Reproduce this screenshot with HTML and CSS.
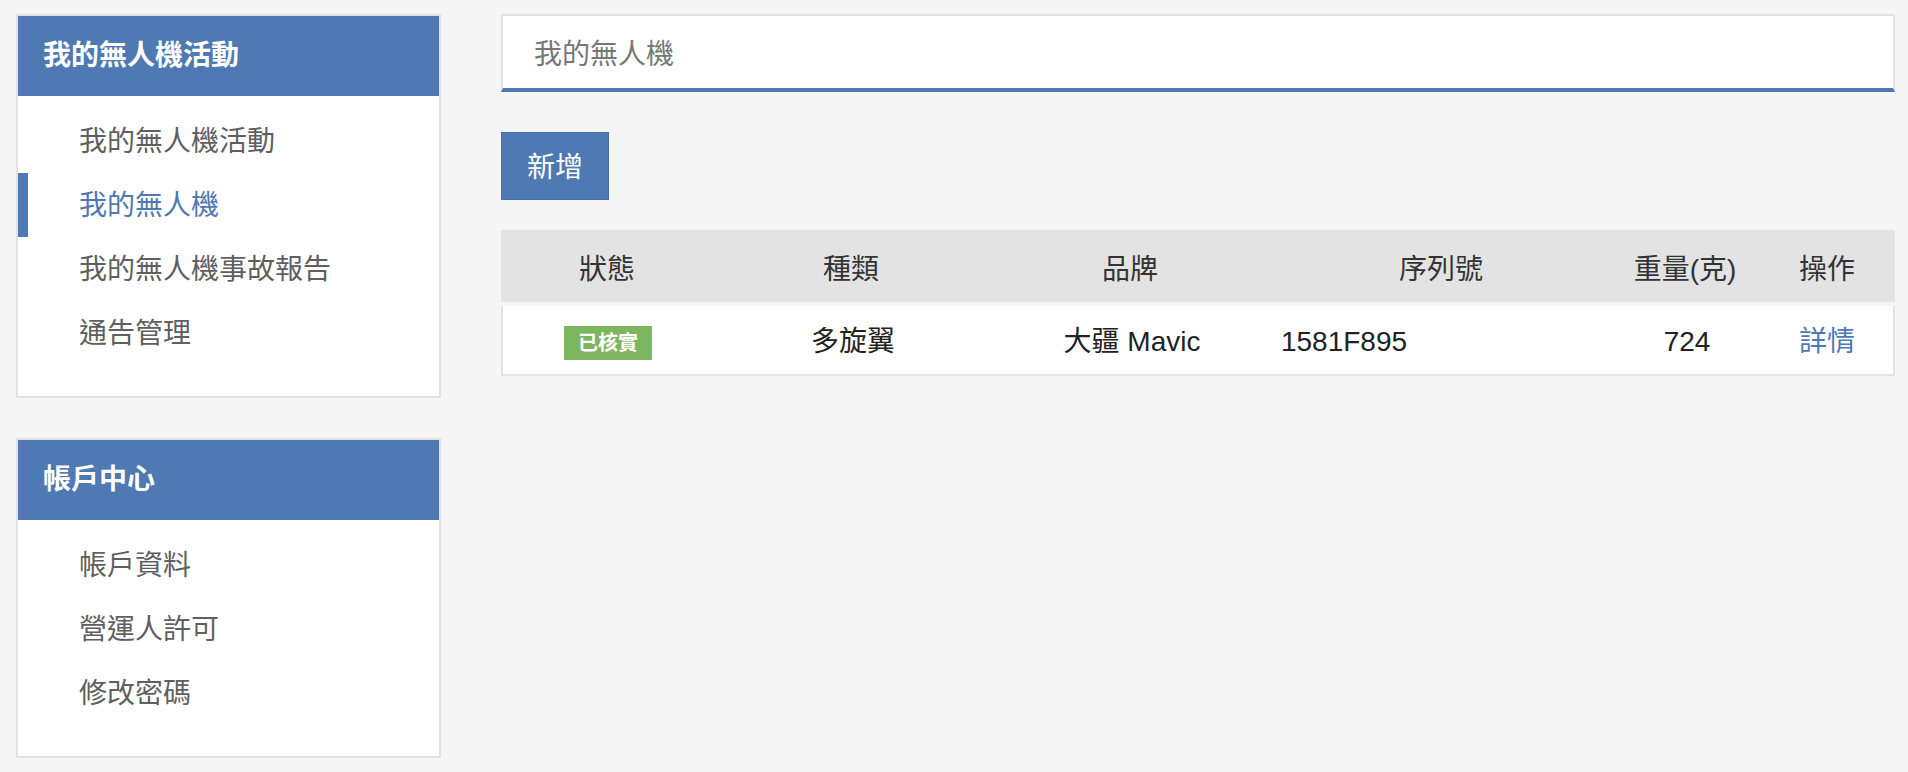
FILE: index.html
```html
<!DOCTYPE html>
<html lang="zh-Hant">
<head>
<meta charset="utf-8">
<title>我的無人機</title>
<link rel="stylesheet" href="styles.css">
</head>
<body>
<div class="page">
  <aside class="sidebar">
    <section class="panel">
      <div class="panel-head">我的無人機活動</div>
      <ul class="panel-menu">
        <li class="menu-item">我的無人機活動</li>
        <li class="menu-item active">我的無人機</li>
        <li class="menu-item">我的無人機事故報告</li>
        <li class="menu-item">通告管理</li>
      </ul>
    </section>
    <section class="panel">
      <div class="panel-head">帳戶中心</div>
      <ul class="panel-menu">
        <li class="menu-item">帳戶資料</li>
        <li class="menu-item">營運人許可</li>
        <li class="menu-item">修改密碼</li>
      </ul>
    </section>
  </aside>
  <main class="content">
    <div class="title-box">我的無人機</div>
    <button class="btn-add" type="button">新增</button>
    <div class="table">
      <div class="thead">
        <div class="cell">狀態</div>
        <div class="cell">種類</div>
        <div class="cell">品牌</div>
        <div class="cell">序列號</div>
        <div class="cell">重量(克)</div>
        <div class="cell">操作</div>
      </div>
      <div class="trow">
        <div class="cell"><span class="badge">已核實</span></div>
        <div class="cell">多旋翼</div>
        <div class="cell">大疆 Mavic</div>
        <div class="cell">1581F895<span class="redacted"></span></div>
        <div class="cell">724</div>
        <div class="cell"><a class="link" href="#">詳情</a></div>
      </div>
    </div>
  </main>
</div>
</body>
</html>
```

FILE: styles.css
```css
* {
  box-sizing: border-box;
}

html, body {
  margin: 0;
  padding: 0;
  background: #f5f5f5;
}

body {
  font-family: "Liberation Sans", "Noto Sans CJK TC", sans-serif;
  color: #333;
}

.page {
  display: flex;
  gap: 60px;
  padding: 14px 13px 0 16px;
}

.sidebar {
  flex: none;
  width: 425px;
  display: flex;
  flex-direction: column;
  gap: 40px;
}

.panel {
  background: #fff;
  border: 2px solid #e2e2e2;
}

.panel-head {
  height: 80px;
  line-height: 80px;
  padding-left: 25px;
  background: #4e79b3;
  color: #fff;
  font-size: 28px;
  font-weight: bold;
}

.panel-menu {
  list-style: none;
  margin: 0;
  padding: 13px 0 31px;
}

.menu-item {
  height: 64px;
  line-height: 64px;
  padding-top: 1px;
  padding-left: 61px;
  font-size: 28px;
  color: #5f5f5f;
}

.menu-item.active {
  border-left: 10px solid #4e79b3;
  padding-left: 51px;
  color: #4e79b3;
}

.content {
  flex: 1;
  min-width: 0;
}

.title-box {
  height: 78px;
  line-height: 72px;
  padding-top: 3px;
  padding-left: 31px;
  background: #fff;
  border: 2px solid #e2e2e2;
  border-bottom: 4px solid #4e79b3;
  font-size: 28px;
  color: #777;
}

.btn-add {
  display: block;
  margin-top: 40px;
  width: 108px;
  height: 68px;
  padding: 3px 0 0;
  background: #4e79b3;
  border: 1px solid #4570aa;
  color: #fff;
  font-family: inherit;
  font-size: 28px;
  line-height: 62px;
  text-align: center;
}

.table {
  margin-top: 30px;
}

.thead,
.trow {
  display: grid;
  grid-template-columns: 212px 276px 282px 340px 148px 1fr;
  align-items: center;
  text-align: center;
  font-size: 28px;
}

.thead {
  height: 72px;
  padding-top: 7px;
  background: #e3e3e3;
  color: #333;
}

.trow {
  margin-top: 4px;
  height: 70px;
  padding-top: 3px;
  background: #fff;
  border: 2px solid #e3e3e3;
  border-top: 0;
  color: #222;
}

.cell {
  line-height: 40px;
  white-space: nowrap;
}

.trow .cell:first-child {
  margin-left: -2px;
}

.badge {
  display: inline-block;
  width: 88px;
  height: 34px;
  line-height: 34px;
  background: #7db65f;
  color: #fff;
  font-size: 20px;
  font-weight: bold;
  vertical-align: middle;
}

.redacted {
  display: inline-block;
  width: 198px;
  height: 30px;
  vertical-align: middle;
  background: radial-gradient(ellipse at center, #fefefe 0%, #ffffff 70%);
}

.link {
  color: #4e79b3;
  text-decoration: none;
}
```
